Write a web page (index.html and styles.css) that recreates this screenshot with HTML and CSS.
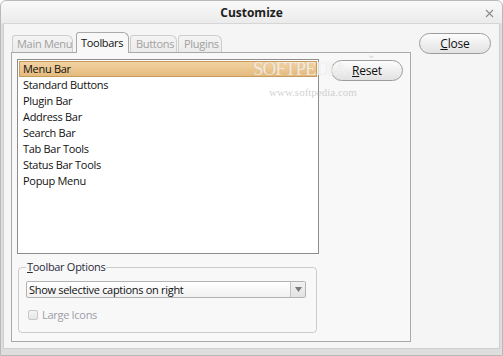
FILE: index.html
```html
<!DOCTYPE html>
<html>
<head>
<meta charset="utf-8">
<link rel="stylesheet" href="styles.css">
</head>
<body>
<div class="window">
  <div class="titlebar">
    <span class="title">Customize</span>
    <svg class="xicon" width="9" height="9" viewBox="0 0 9 9"><path d="M1 1L8 8M8 1L1 8" stroke="#8a8a8a" stroke-width="1.1" fill="none"/></svg>
  </div>
  <div class="client">
    <div class="tabctl">
      <div class="tabs">
        <div class="tab t1">Main Menu</div>
        <div class="tab active">Toolbars</div>
        <div class="tab t3">Buttons</div>
        <div class="tab t4">Plugins</div>
      </div>
      <div class="panel">
        <div class="toprow">
          <div class="list">
            <div class="item selected">Menu Bar</div>
            <div class="item">Standard Buttons</div>
            <div class="item">Plugin Bar</div>
            <div class="item">Address Bar</div>
            <div class="item">Search Bar</div>
            <div class="item">Tab Bar Tools</div>
            <div class="item">Status Bar Tools</div>
            <div class="item">Popup Menu</div>
          </div>
          <div class="btn reset"><u>R</u>eset</div>
        </div>
        <fieldset class="group">
          <legend><u>T</u>oolbar Options</legend>
          <div class="select">
            <span class="value">Show selective captions on right</span>
            <span class="arrow"><svg width="7" height="5" viewBox="0 0 7 5"><path d="M0 0H7L3.5 5Z" fill="#7a7a7a"/></svg></span>
          </div>
          <div class="check"><span class="box"></span><span class="clabel">Lar<u>g</u>e Icons</span></div>
        </fieldset>
      </div>
    </div>
    <div class="side">
      <div class="btn close"><u>C</u>lose</div>
    </div>
  </div>
  <div class="watermark">
    <div class="wm-big">SOFTPEDIA</div>
    <div class="wm-small">www.softpedia.com</div>
    <span class="wm-tm">™</span>
  </div>
</div>
</body>
</html>
```
FILE: styles.css
```css
* { box-sizing: border-box; }
html, body { margin: 0; padding: 0; background: #ffffff; }
body { font-family: "Open Sans", "Noto Sans", sans-serif; font-size: 11px; letter-spacing: -0.3px; color: #111; }

.window {
  position: relative;
  width: 503px;
  height: 356px;
  border: 1px solid #b9b9b9;
  border-radius: 6px 6px 0 0;
  background: linear-gradient(#f9f9f9 0, #ebebeb 22px, #dedede 23px, #dedede 100%);
  display: flex;
  flex-direction: column;
  overflow: hidden;
}

.titlebar {
  height: 22px;
  position: relative;
  display: flex;
  align-items: center;
  justify-content: center;
}
.title { font-weight: bold; font-size: 12px; letter-spacing: 0; color: #1e1e1e; margin-top: 1px; }
.xicon { position: absolute; right: 8px; top: 8px; }

.client {
  flex: 1;
  margin: 0 2px 6px 2px;
  border: 1px solid #cfcfcf;
  border-top-color: #d6d6d6;
  background: #f5f5f5;
  display: flex;
  padding: 8px 0 0 7px;
}

.tabctl { width: 400px; display: flex; flex-direction: column; }
.tabs { display: flex; height: 20px; align-items: flex-end; position: relative; z-index: 2; }
.tab {
  height: 17px;
  padding: 0 0 0 5px;
  border: 1px solid #cdcdcd;
  border-bottom: none;
  border-radius: 3px 6px 0 0;
  background: linear-gradient(#f4f4f4, #ececec);
  color: #a0a0a0;
  line-height: 15px;
  white-space: nowrap;
  overflow: hidden;
}
.t1 { width: 61px; margin-left: 1px; padding-left: 4px; }
.t3 { width: 47px; margin-left: 1px; }
.t4 { width: 44px; margin-left: 1px; }
.tab.active {
  height: 21px;
  width: 53px;
  margin-bottom: -1px;
  margin-left: 3px;
  border-color: #a9a9a9;
  background: #f8f8f8;
  color: #111;
  line-height: 20px;
  padding-left: 4px;
}

.panel {
  height: 290px;
  border: 1px solid #a9a9a9;
  background: #f8f8f8;
  padding: 6px 0 0 5px;
}

.toprow { display: flex; align-items: flex-start; }
.list {
  width: 302px;
  height: 195px;
  border: 1px solid #8d8d8d;
  background: #ffffff;
  padding: 1px;
}
.item {
  height: 16px;
  line-height: 14px;
  padding-left: 3px;
  color: #111;
  border: 1px solid transparent;
  white-space: nowrap;
}
.item.selected {
  background: linear-gradient(#f2d2a2, #e4bb7e);
  border-color: #c89a5c;
}

.btn {
  width: 72px;
  height: 21px;
  border: 1px solid #9c9c9c;
  border-radius: 11px;
  background: linear-gradient(#fdfdfd 0%, #efefef 50%, #e2e2e2 100%);
  text-align: center;
  line-height: 19px;
  font-size: 12px;
  letter-spacing: -0.2px;
  color: #111;
}
.reset { margin-left: 12px; margin-top: 1px; }
.side { padding: 1px 0 0 8px; }

.group {
  margin: 5px 0 0 1px;
  width: 299px;
  height: 74px;
  border: 1px solid #cbcbcb;
  border-radius: 4px;
  padding: 6px 9px 0 7px;
  min-width: 0;
}
.group legend {
  padding: 0 1px;
  color: #2a2a3a;
  line-height: 16px;
}
.select {
  width: 280px;
  height: 17px;
  border: 1px solid #b3b3b3;
  border-radius: 2px;
  background: linear-gradient(#ffffff, #f1f1f1);
  display: flex;
  align-items: center;
  justify-content: space-between;
}
.value { padding-left: 2px; line-height: 15px; color: #111; }
.arrow {
  width: 15px;
  height: 15px;
  border-left: 1px solid #c2c2c2;
  background: linear-gradient(#f2f2f2, #e2e2e2);
  display: flex;
  align-items: center;
  justify-content: center;
}
.check { display: flex; align-items: center; margin-top: 10px; padding-left: 2px; }
.box {
  width: 10px;
  height: 10px;
  border: 1px solid #c8c8c8;
  border-radius: 2px;
  background: linear-gradient(#f4f4f4, #e6e6e6);
  margin-right: 4px;
}
.clabel { color: #9c9ca8; line-height: 14px; }

.watermark {
  position: absolute;
  left: 252px;
  top: 57px;
  width: 100px;
  pointer-events: none;
  z-index: 5;
}
.wm-big {
  font-family: "Liberation Serif", serif;
  font-size: 19px;
  letter-spacing: -1px;
  color: rgba(255,255,255,0.7);
  text-shadow: 0 0 1px rgba(150,150,150,0.3);
  line-height: 22px;
  white-space: nowrap;
}
.wm-tm {
  position: absolute;
  left: 116px;
  top: -3px;
  font-size: 6px;
  line-height: 6px;
  letter-spacing: 0;
  color: rgba(160,160,160,0.5);
}
.wm-small {
  font-family: "Liberation Serif", serif;
  font-size: 11px;
  letter-spacing: 0;
  color: rgba(170,170,170,0.55);
  margin-top: 6px;
  margin-left: 16px;
  white-space: nowrap;
}
```
